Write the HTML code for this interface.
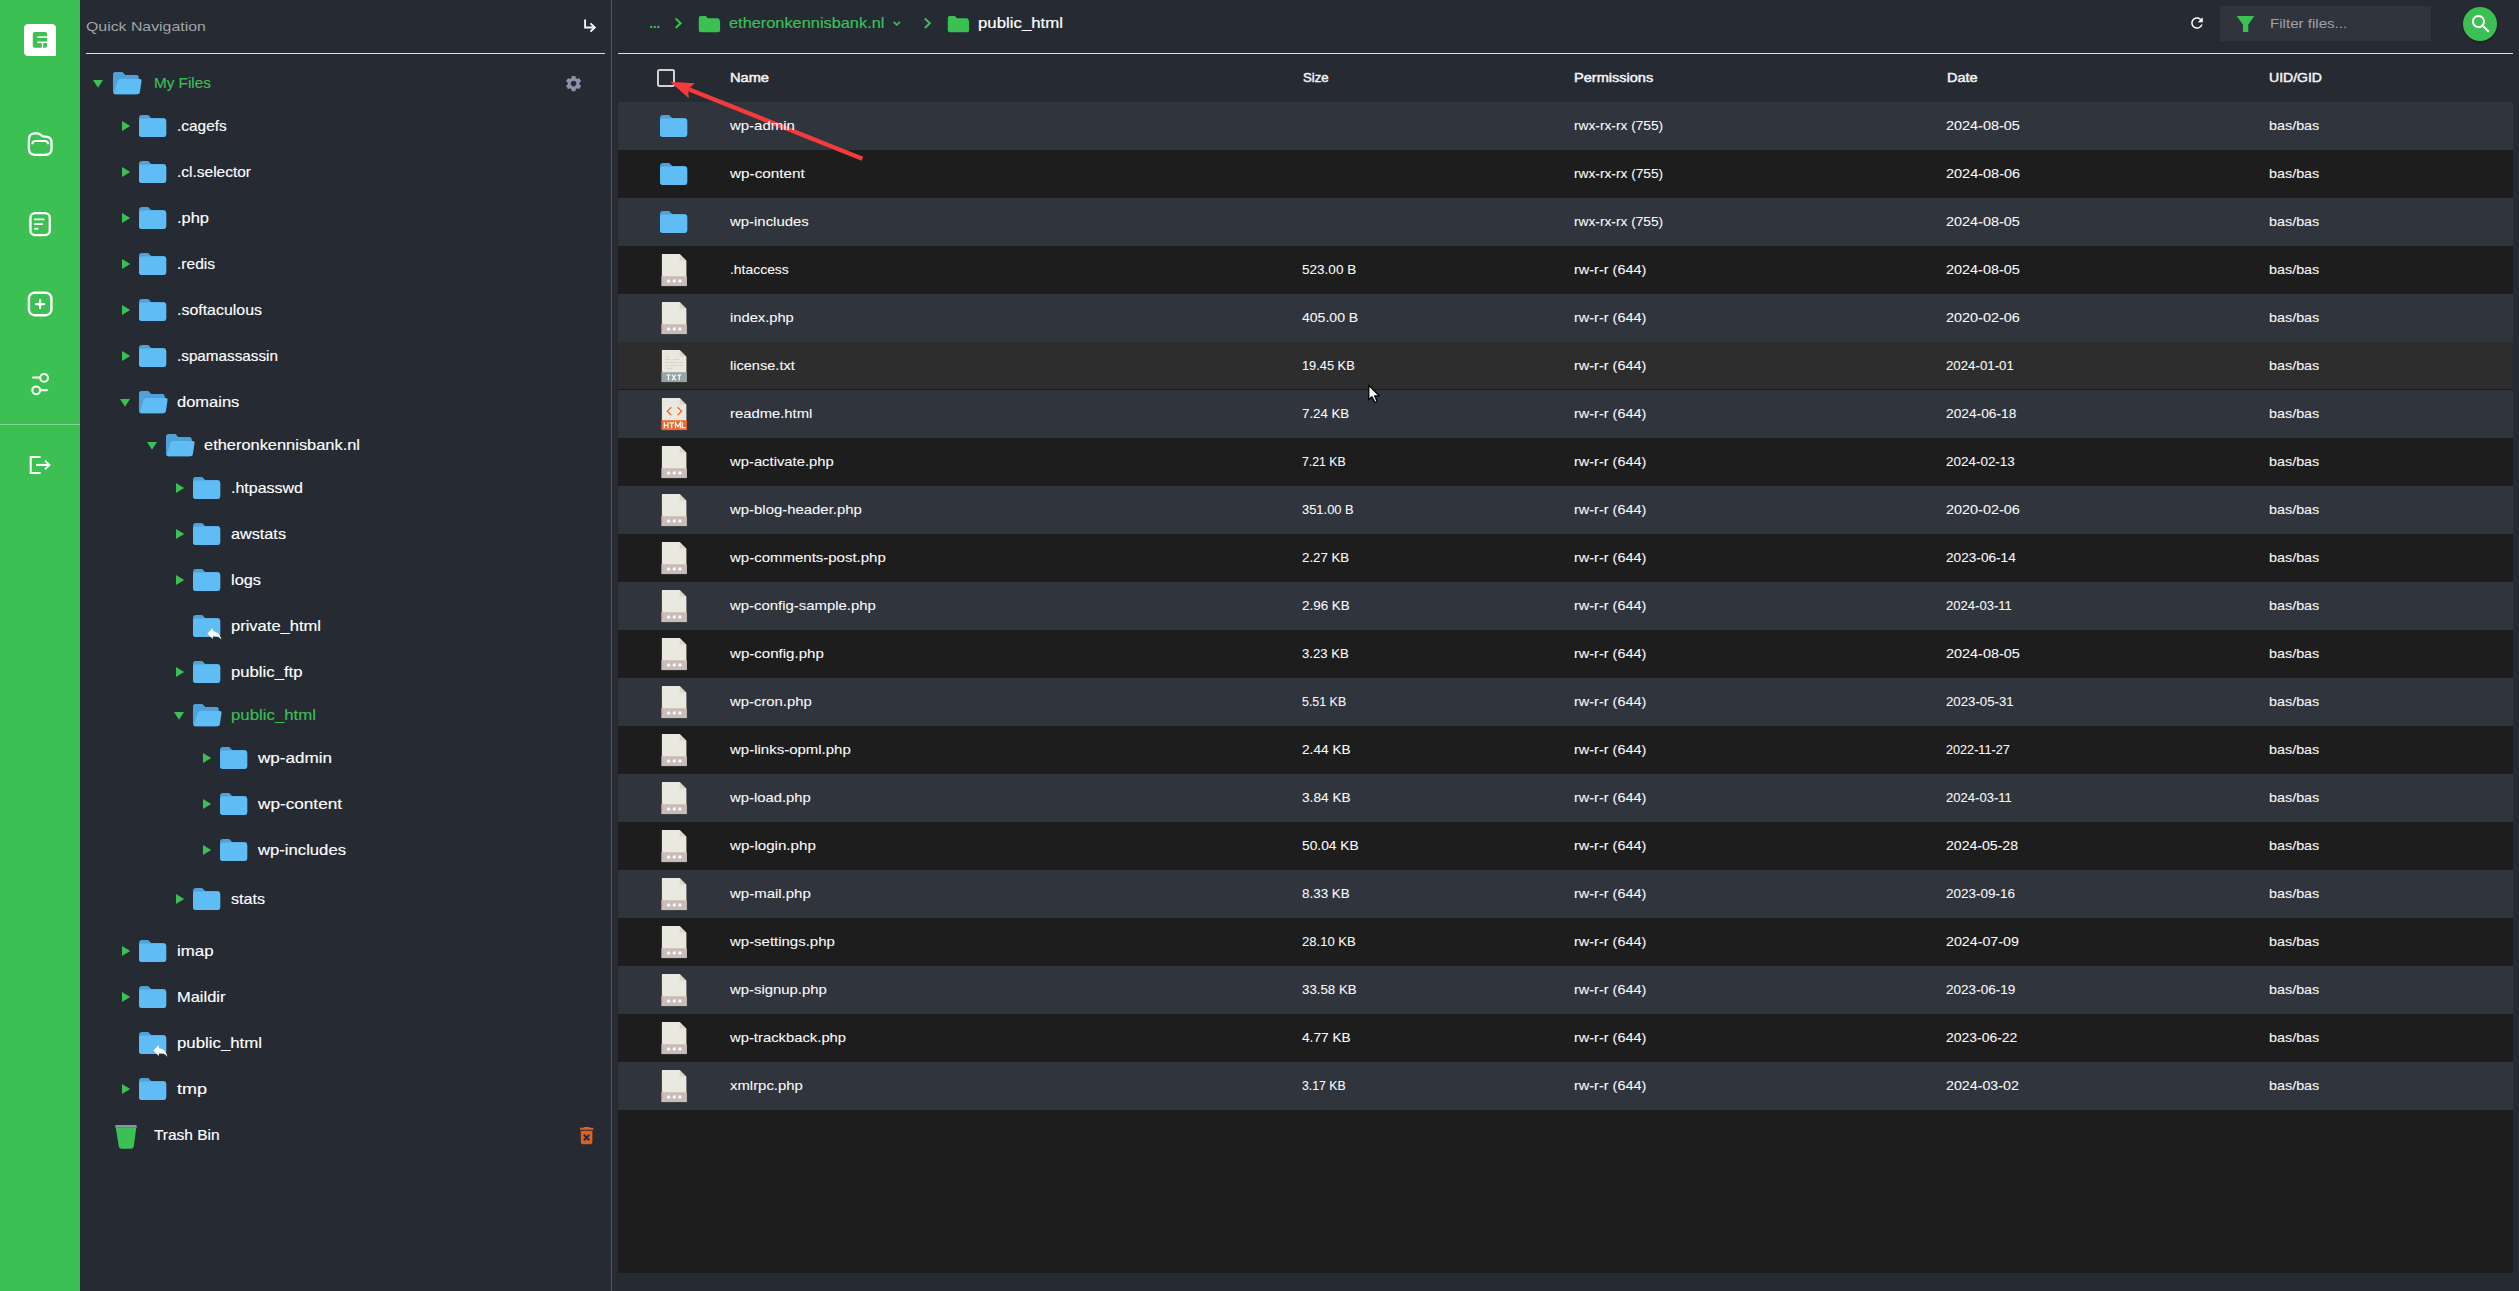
<!DOCTYPE html>
<html lang="en"><head><meta charset="utf-8"><title>File Manager</title>
<style>
html,body{margin:0;padding:0;background:#252a33}
body{width:2519px;height:1291px;overflow:hidden;position:relative;background:#252a33;font-family:"Liberation Sans",sans-serif;color:#fff}
.a{position:absolute;display:block}
.t{position:absolute;white-space:nowrap;transform-origin:0 50%;line-height:20px;height:20px;margin-top:-10px}
.tr{font-size:15px;color:#fff;-webkit-text-stroke:.15px #fff}
.bc{font-size:15px;color:#fff;-webkit-text-stroke:.2px #fff}
.g{color:#3cc054;-webkit-text-stroke-color:#3cc054}
.qn{font-size:13px;color:#a3a4a8}
.ff{font-size:13.500px;color:#a0a1a5}
.th{font-size:12.300px;color:#f4f4f4;-webkit-text-stroke:.45px #f4f4f4}
.td{font-size:13px;color:#fafafa;-webkit-text-stroke:.08px #fafafa}
</style></head>
<body>
<div class="a" style="left:0;top:0;width:80px;height:1291px;background:#3cc054"></div>
<svg class="a" style="left:24px;top:24px" width="32" height="32" viewBox="0 0 32 32"><path fill="#fff" d="M4.5 0H27.5Q32 0 32 4.5V32H4.5Q0 32 0 27.5V4.5Q0 0 4.5 0Z"/><rect x="8.8" y="8" width="14.3" height="15.8" rx="2" fill="#3cc054"/><rect x="13.3" y="12.3" width="10" height="1.5" fill="#fff"/><rect x="13.3" y="17.6" width="10" height="1.5" fill="#fff"/><rect x="17.8" y="19.1" width="1.4" height="5" fill="#fff"/></svg>
<svg class="a" style="left:20px;top:125px" width="40" height="40" viewBox="20 125 40 40" fill="none" stroke="#fff" stroke-width="2.3" stroke-linecap="round" stroke-linejoin="round"><path d="M28.9 148.5V139.5Q28.9 133.3 35 133.3H36.6Q39.3 133.3 40.8 135Q42.3 136.7 44.6 136.7H45.6Q51.5 136.7 51.5 142.8V148.5Q51.5 154.8 45.3 154.8H35.1Q28.9 154.8 28.9 148.5Z"/><path stroke-width="2" d="M32.4 143.4Q33 141.1 35.3 141.1H45.1Q47.4 141.1 48 143.4"/></svg>
<svg class="a" style="left:20px;top:204px" width="40" height="40" viewBox="20 204 40 40" fill="none" stroke="#fff" stroke-width="2.3" stroke-linecap="round"><rect x="30.45" y="213.15" width="19.3" height="21.9" rx="4.6"/><path stroke-width="1.9" d="M34.9 219.4H43.6M34.9 224.1H42.2M34.9 228.7H37.6"/></svg>
<svg class="a" style="left:20px;top:284px" width="40" height="40" viewBox="20 284 40 40" fill="none" stroke="#fff" stroke-width="2.4" stroke-linecap="round"><rect x="28.9" y="292.7" width="22.5" height="22.5" rx="5.8"/><path stroke-width="2.2" d="M36 304.1H44.2M40.1 300V308.2"/></svg>
<svg class="a" style="left:20px;top:364px" width="40" height="40" viewBox="20 364 40 40" fill="none" stroke="#fff" stroke-width="2" stroke-linecap="round"><circle cx="44.1" cy="377.9" r="3.9"/><path d="M33 377.6H39.6"/><circle cx="36.2" cy="390.3" r="3.9"/><path d="M40.8 390.3H47.2"/></svg>
<div class="a" style="left:0;top:424px;width:80px;height:1px;background:rgba(255,255,255,.35)"></div>
<svg class="a" style="left:20px;top:445px" width="40" height="40" viewBox="20 445 40 40" fill="none" stroke="#fff" stroke-width="2" stroke-linecap="butt" stroke-linejoin="miter"><path d="M40.6 457H30.7V473H40.6"/><path d="M36 464.9H49"/><path d="M45 460.6L49.4 464.9L45 469.2"/></svg>
<svg class="a" style="left:580px;top:15px" width="20" height="20" viewBox="580 15 20 20" fill="none" stroke="#fff" stroke-width="1.8"><path d="M585.1 19.4V27.5H594.2"/><path d="M590.5 23.4L594.8 27.5L590.5 31.6"/></svg>
<div class="a" style="left:86px;top:52.6px;width:519px;height:1.5px;background:#dedede"></div>
<svg class="a" style="left:563.900px;top:73.900px" width="19.200" height="19.200" viewBox="0 0 24 24"><path fill="#8a93ab" d="M19.14 12.94c.04-.3.06-.61.06-.94 0-.32-.02-.64-.07-.94l2.03-1.58c.18-.14.23-.41.12-.61l-1.92-3.32c-.12-.22-.37-.29-.59-.22l-2.39.96c-.5-.38-1.03-.7-1.62-.94l-.36-2.54c-.04-.24-.24-.41-.48-.41h-3.84c-.24 0-.43.17-.47.41l-.36 2.54c-.59.24-1.13.57-1.62.94l-2.39-.96c-.22-.08-.47 0-.59.22L2.74 8.87c-.12.21-.08.47.12.61l2.03 1.58c-.05.3-.09.63-.09.94s.02.64.07.94l-2.03 1.58c-.18.14-.23.41-.12.61l1.92 3.32c.12.22.37.29.59.22l2.39-.96c.5.38 1.03.7 1.62.94l.36 2.54c.05.24.24.41.48.41h3.84c.24 0 .44-.17.47-.41l.36-2.54c.59-.24 1.13-.56 1.62-.94l2.39.96c.22.08.47 0 .59-.22l1.92-3.32c.12-.22.07-.47-.12-.61l-2.01-1.58zM12 15.6c-1.98 0-3.6-1.62-3.6-3.6s1.620-3.6 3.6-3.6 3.6 1.62 3.600 3.600-1.620 3.600-3.600 3.600z"/></svg>
<svg class="a" style="left:93.0px;top:80.2px" width="10" height="8" viewBox="0 0 10 8"><path fill="#3cc054" d="M0 0H10L5 7.8Z"/></svg>
<svg class="a" style="left:112.6px;top:72.1px" width="30" height="23" viewBox="0 0 30 23"><path fill="#4ea2d9" d="M0 2.5Q0 0 2.5 0H9.4L12.3 2.9H23.3Q25.8 2.9 25.8 5.4V19.8Q25.8 22.3 23.3 22.3H2.5Q0 22.3 0 19.8Z"/><path fill="#60bcf5" d="M7.4 7.1H26.5Q28.9 7.1 28.5 9.4L26.9 20.2Q26.6 22.3 24.4 22.3H2.6Q0.5 22.3 1.1 20.2L4.5 9Q5.1 7.1 7.4 7.1Z"/></svg>
<svg class="a" style="left:121.9px;top:121.1px" width="9" height="10" viewBox="0 0 9 10"><path fill="#3cc054" d="M0 0L8.2 5L0 10Z"/></svg>
<svg class="a" style="left:139.15px;top:114.90px" width="28" height="23" viewBox="0 0 28 23"><path fill="#4ea2d9" d="M0 3Q0 0 3 0H9.2L12.1 2.900H24.200Q27.200 2.900 27.200 5.900V19Q27.200 22 24.200 22H3Q0 22 0 19Z"/><rect fill="#60bcf5" x="0" y="3.600" width="27.200" height="18.400" rx="3"/></svg>
<svg class="a" style="left:121.9px;top:167.1px" width="9" height="10" viewBox="0 0 9 10"><path fill="#3cc054" d="M0 0L8.2 5L0 10Z"/></svg>
<svg class="a" style="left:139.15px;top:160.90px" width="28" height="23" viewBox="0 0 28 23"><path fill="#4ea2d9" d="M0 3Q0 0 3 0H9.2L12.1 2.900H24.200Q27.200 2.900 27.200 5.900V19Q27.200 22 24.200 22H3Q0 22 0 19Z"/><rect fill="#60bcf5" x="0" y="3.600" width="27.200" height="18.400" rx="3"/></svg>
<svg class="a" style="left:121.9px;top:213.1px" width="9" height="10" viewBox="0 0 9 10"><path fill="#3cc054" d="M0 0L8.2 5L0 10Z"/></svg>
<svg class="a" style="left:139.15px;top:206.90px" width="28" height="23" viewBox="0 0 28 23"><path fill="#4ea2d9" d="M0 3Q0 0 3 0H9.2L12.1 2.900H24.200Q27.200 2.900 27.200 5.900V19Q27.200 22 24.200 22H3Q0 22 0 19Z"/><rect fill="#60bcf5" x="0" y="3.600" width="27.200" height="18.400" rx="3"/></svg>
<svg class="a" style="left:121.9px;top:259.1px" width="9" height="10" viewBox="0 0 9 10"><path fill="#3cc054" d="M0 0L8.2 5L0 10Z"/></svg>
<svg class="a" style="left:139.15px;top:252.90px" width="28" height="23" viewBox="0 0 28 23"><path fill="#4ea2d9" d="M0 3Q0 0 3 0H9.2L12.1 2.900H24.200Q27.200 2.900 27.200 5.900V19Q27.200 22 24.200 22H3Q0 22 0 19Z"/><rect fill="#60bcf5" x="0" y="3.600" width="27.200" height="18.400" rx="3"/></svg>
<svg class="a" style="left:121.9px;top:305.1px" width="9" height="10" viewBox="0 0 9 10"><path fill="#3cc054" d="M0 0L8.2 5L0 10Z"/></svg>
<svg class="a" style="left:139.15px;top:298.90px" width="28" height="23" viewBox="0 0 28 23"><path fill="#4ea2d9" d="M0 3Q0 0 3 0H9.2L12.1 2.900H24.200Q27.200 2.900 27.200 5.900V19Q27.200 22 24.200 22H3Q0 22 0 19Z"/><rect fill="#60bcf5" x="0" y="3.600" width="27.200" height="18.400" rx="3"/></svg>
<svg class="a" style="left:121.9px;top:351.1px" width="9" height="10" viewBox="0 0 9 10"><path fill="#3cc054" d="M0 0L8.2 5L0 10Z"/></svg>
<svg class="a" style="left:139.15px;top:344.90px" width="28" height="23" viewBox="0 0 28 23"><path fill="#4ea2d9" d="M0 3Q0 0 3 0H9.2L12.1 2.900H24.200Q27.200 2.900 27.200 5.900V19Q27.200 22 24.200 22H3Q0 22 0 19Z"/><rect fill="#60bcf5" x="0" y="3.600" width="27.200" height="18.400" rx="3"/></svg>
<svg class="a" style="left:120.0px;top:399.1px" width="10" height="8" viewBox="0 0 10 8"><path fill="#3cc054" d="M0 0H10L5 7.8Z"/></svg>
<svg class="a" style="left:139.3px;top:391.0px" width="30" height="23" viewBox="0 0 30 23"><path fill="#4ea2d9" d="M0 2.5Q0 0 2.5 0H9.4L12.3 2.9H23.3Q25.8 2.9 25.8 5.4V19.8Q25.8 22.3 23.3 22.3H2.5Q0 22.3 0 19.8Z"/><path fill="#60bcf5" d="M7.4 7.1H26.5Q28.9 7.1 28.5 9.4L26.9 20.2Q26.6 22.3 24.4 22.3H2.6Q0.5 22.3 1.1 20.2L4.5 9Q5.1 7.1 7.4 7.1Z"/></svg>
<svg class="a" style="left:147.0px;top:442.1px" width="10" height="8" viewBox="0 0 10 8"><path fill="#3cc054" d="M0 0H10L5 7.8Z"/></svg>
<svg class="a" style="left:166.3px;top:434.0px" width="30" height="23" viewBox="0 0 30 23"><path fill="#4ea2d9" d="M0 2.5Q0 0 2.5 0H9.4L12.3 2.9H23.3Q25.8 2.9 25.8 5.4V19.8Q25.8 22.3 23.3 22.3H2.5Q0 22.3 0 19.8Z"/><path fill="#60bcf5" d="M7.4 7.1H26.5Q28.9 7.1 28.5 9.4L26.9 20.2Q26.6 22.3 24.4 22.3H2.6Q0.5 22.3 1.1 20.2L4.5 9Q5.1 7.1 7.4 7.1Z"/></svg>
<svg class="a" style="left:175.9px;top:483.1px" width="9" height="10" viewBox="0 0 9 10"><path fill="#3cc054" d="M0 0L8.2 5L0 10Z"/></svg>
<svg class="a" style="left:193.15px;top:476.90px" width="28" height="23" viewBox="0 0 28 23"><path fill="#4ea2d9" d="M0 3Q0 0 3 0H9.2L12.1 2.900H24.200Q27.200 2.900 27.200 5.900V19Q27.200 22 24.200 22H3Q0 22 0 19Z"/><rect fill="#60bcf5" x="0" y="3.600" width="27.200" height="18.400" rx="3"/></svg>
<svg class="a" style="left:175.9px;top:529.1px" width="9" height="10" viewBox="0 0 9 10"><path fill="#3cc054" d="M0 0L8.2 5L0 10Z"/></svg>
<svg class="a" style="left:193.15px;top:522.90px" width="28" height="23" viewBox="0 0 28 23"><path fill="#4ea2d9" d="M0 3Q0 0 3 0H9.2L12.1 2.900H24.200Q27.200 2.900 27.200 5.900V19Q27.200 22 24.200 22H3Q0 22 0 19Z"/><rect fill="#60bcf5" x="0" y="3.600" width="27.200" height="18.400" rx="3"/></svg>
<svg class="a" style="left:175.9px;top:575.1px" width="9" height="10" viewBox="0 0 9 10"><path fill="#3cc054" d="M0 0L8.2 5L0 10Z"/></svg>
<svg class="a" style="left:193.15px;top:568.90px" width="28" height="23" viewBox="0 0 28 23"><path fill="#4ea2d9" d="M0 3Q0 0 3 0H9.2L12.1 2.900H24.200Q27.200 2.900 27.200 5.900V19Q27.200 22 24.200 22H3Q0 22 0 19Z"/><rect fill="#60bcf5" x="0" y="3.600" width="27.200" height="18.400" rx="3"/></svg>
<svg class="a" style="left:193.15px;top:614.90px" width="28" height="23" viewBox="0 0 28 23"><path fill="#4ea2d9" d="M0 3Q0 0 3 0H9.2L12.1 2.900H24.200Q27.200 2.900 27.200 5.900V19Q27.200 22 24.200 22H3Q0 22 0 19Z"/><rect fill="#60bcf5" x="0" y="3.600" width="27.200" height="18.400" rx="3"/></svg><svg class="a" style="left:204.9px;top:624.1px" width="18.8" height="18.8" viewBox="0 0 24 24"><path fill="#fff" d="M10 9V5l-7 7 7 7v-4.1c5 0 8.5 1.6 11 5.1-1-5-4-10-11-11z"/></svg>
<svg class="a" style="left:175.9px;top:667.1px" width="9" height="10" viewBox="0 0 9 10"><path fill="#3cc054" d="M0 0L8.2 5L0 10Z"/></svg>
<svg class="a" style="left:193.15px;top:660.90px" width="28" height="23" viewBox="0 0 28 23"><path fill="#4ea2d9" d="M0 3Q0 0 3 0H9.2L12.1 2.900H24.200Q27.200 2.900 27.200 5.900V19Q27.200 22 24.200 22H3Q0 22 0 19Z"/><rect fill="#60bcf5" x="0" y="3.600" width="27.200" height="18.400" rx="3"/></svg>
<svg class="a" style="left:174.0px;top:712.1px" width="10" height="8" viewBox="0 0 10 8"><path fill="#3cc054" d="M0 0H10L5 7.8Z"/></svg>
<svg class="a" style="left:193.3px;top:704.0px" width="30" height="23" viewBox="0 0 30 23"><path fill="#4ea2d9" d="M0 2.5Q0 0 2.5 0H9.4L12.3 2.9H23.3Q25.8 2.9 25.8 5.4V19.8Q25.8 22.3 23.3 22.3H2.5Q0 22.3 0 19.8Z"/><path fill="#60bcf5" d="M7.4 7.1H26.5Q28.9 7.1 28.5 9.4L26.9 20.2Q26.6 22.3 24.4 22.3H2.6Q0.5 22.3 1.1 20.2L4.5 9Q5.1 7.1 7.4 7.1Z"/></svg>
<svg class="a" style="left:202.9px;top:753.1px" width="9" height="10" viewBox="0 0 9 10"><path fill="#3cc054" d="M0 0L8.2 5L0 10Z"/></svg>
<svg class="a" style="left:220.15px;top:746.90px" width="28" height="23" viewBox="0 0 28 23"><path fill="#4ea2d9" d="M0 3Q0 0 3 0H9.2L12.1 2.900H24.200Q27.200 2.900 27.200 5.900V19Q27.200 22 24.200 22H3Q0 22 0 19Z"/><rect fill="#60bcf5" x="0" y="3.600" width="27.200" height="18.400" rx="3"/></svg>
<svg class="a" style="left:202.9px;top:799.1px" width="9" height="10" viewBox="0 0 9 10"><path fill="#3cc054" d="M0 0L8.2 5L0 10Z"/></svg>
<svg class="a" style="left:220.15px;top:792.90px" width="28" height="23" viewBox="0 0 28 23"><path fill="#4ea2d9" d="M0 3Q0 0 3 0H9.2L12.1 2.900H24.200Q27.200 2.900 27.200 5.900V19Q27.200 22 24.200 22H3Q0 22 0 19Z"/><rect fill="#60bcf5" x="0" y="3.600" width="27.200" height="18.400" rx="3"/></svg>
<svg class="a" style="left:202.9px;top:845.1px" width="9" height="10" viewBox="0 0 9 10"><path fill="#3cc054" d="M0 0L8.2 5L0 10Z"/></svg>
<svg class="a" style="left:220.15px;top:838.90px" width="28" height="23" viewBox="0 0 28 23"><path fill="#4ea2d9" d="M0 3Q0 0 3 0H9.2L12.1 2.900H24.200Q27.200 2.900 27.200 5.900V19Q27.200 22 24.200 22H3Q0 22 0 19Z"/><rect fill="#60bcf5" x="0" y="3.600" width="27.200" height="18.400" rx="3"/></svg>
<svg class="a" style="left:175.9px;top:894.2px" width="9" height="10" viewBox="0 0 9 10"><path fill="#3cc054" d="M0 0L8.2 5L0 10Z"/></svg>
<svg class="a" style="left:193.15px;top:888.00px" width="28" height="23" viewBox="0 0 28 23"><path fill="#4ea2d9" d="M0 3Q0 0 3 0H9.2L12.1 2.900H24.200Q27.200 2.900 27.200 5.900V19Q27.200 22 24.200 22H3Q0 22 0 19Z"/><rect fill="#60bcf5" x="0" y="3.600" width="27.200" height="18.400" rx="3"/></svg>
<svg class="a" style="left:121.9px;top:946.1px" width="9" height="10" viewBox="0 0 9 10"><path fill="#3cc054" d="M0 0L8.2 5L0 10Z"/></svg>
<svg class="a" style="left:139.15px;top:939.90px" width="28" height="23" viewBox="0 0 28 23"><path fill="#4ea2d9" d="M0 3Q0 0 3 0H9.2L12.1 2.900H24.200Q27.200 2.900 27.200 5.900V19Q27.200 22 24.200 22H3Q0 22 0 19Z"/><rect fill="#60bcf5" x="0" y="3.600" width="27.200" height="18.400" rx="3"/></svg>
<svg class="a" style="left:121.9px;top:992.2px" width="9" height="10" viewBox="0 0 9 10"><path fill="#3cc054" d="M0 0L8.2 5L0 10Z"/></svg>
<svg class="a" style="left:139.15px;top:986.00px" width="28" height="23" viewBox="0 0 28 23"><path fill="#4ea2d9" d="M0 3Q0 0 3 0H9.2L12.1 2.900H24.200Q27.200 2.900 27.200 5.900V19Q27.200 22 24.200 22H3Q0 22 0 19Z"/><rect fill="#60bcf5" x="0" y="3.600" width="27.200" height="18.400" rx="3"/></svg>
<svg class="a" style="left:139.15px;top:1032.00px" width="28" height="23" viewBox="0 0 28 23"><path fill="#4ea2d9" d="M0 3Q0 0 3 0H9.2L12.1 2.900H24.200Q27.200 2.900 27.200 5.900V19Q27.200 22 24.200 22H3Q0 22 0 19Z"/><rect fill="#60bcf5" x="0" y="3.600" width="27.200" height="18.400" rx="3"/></svg><svg class="a" style="left:150.9px;top:1041.2px" width="18.8" height="18.8" viewBox="0 0 24 24"><path fill="#fff" d="M10 9V5l-7 7 7 7v-4.1c5 0 8.5 1.6 11 5.1-1-5-4-10-11-11z"/></svg>
<svg class="a" style="left:121.9px;top:1084.2px" width="9" height="10" viewBox="0 0 9 10"><path fill="#3cc054" d="M0 0L8.2 5L0 10Z"/></svg>
<svg class="a" style="left:139.15px;top:1078.00px" width="28" height="23" viewBox="0 0 28 23"><path fill="#4ea2d9" d="M0 3Q0 0 3 0H9.2L12.1 2.900H24.200Q27.200 2.900 27.200 5.900V19Q27.200 22 24.200 22H3Q0 22 0 19Z"/><rect fill="#60bcf5" x="0" y="3.600" width="27.200" height="18.400" rx="3"/></svg>
<svg class="a" style="left:113px;top:1123px" width="26" height="27" viewBox="113 1123 26 27"><path fill="#8d93a6" d="M115.6 1124.9H136.4L137 1127.8H115Z"/><path fill="#3cc054" d="M115.8 1127.8H136.3L133.8 1146.6Q133.5 1148.7 131.4 1148.7H121.2Q119.1 1148.7 118.8 1146.6Z"/></svg>
<svg class="a" style="left:574.9px;top:1123.7px" width="23.2" height="23.2" viewBox="0 0 24 24"><path fill="#e0601c" d="M6 19c0 1.1.9 2 2 2h8c1.1 0 2-.9 2-2V7H6v12zm2.46-7.12l1.41-1.41L12 12.59l2.12-2.12 1.41 1.41L13.41 14l2.12 2.120-1.410 1.410L12 15.41l-2.120 2.120-1.410-1.410L10.590 14l-2.130-2.120zM15.500 4l-1-1h-5l-1 1H5v2h14V4z"/></svg>
<div class="a" style="left:611px;top:0;width:1.2px;height:1291px;background:#54575c"></div>
<svg class="a" style="left:640px;top:10px" width="340" height="30" viewBox="640 10 340 30"><g fill="#3cc054"><rect x="650.2" y="25.9" width="2.1" height="2.1"/><rect x="653.7" y="25.9" width="2.1" height="2.1"/><rect x="657.2" y="25.9" width="2.1" height="2.1"/></g><g fill="none" stroke="#3cc054" stroke-width="2"><path d="M675.6 18.6L680.6 23.3L675.6 28"/><path d="M924.8 18.6L929.8 23.3L924.8 28"/><path stroke-width="1.7" d="M893.6 21.8L896.8 24.9L900 21.8"/></g><path fill="#3cc054" d="M698.8 18Q698.800 16 700.800 16H705.800L708 18.200H717.600Q719.600 18.200 719.600 20.200L720.100 21.300V30.200Q720.100 32.200 718.100 32.200H700.800Q698.800 32.200 698.800 30.200Z"/><path fill="#3cc054" d="M947.800 18Q947.800 16 949.800 16H954.800L957 18.200H966.600Q968.600 18.200 968.600 20.200L969.100 21.300V30.200Q969.100 32.200 967.100 32.200H949.800Q947.800 32.200 947.800 30.200Z"/></svg>
<svg class="a" style="left:2187.100px;top:13.200px" width="20" height="20" viewBox="-1.8 -1.8 27.6 27.6"><path fill="#fff" d="M17.65 6.35C16.2 4.9 14.21 4 12 4c-4.42 0-7.99 3.58-7.99 8s3.570 8 7.990 8c3.730 0 6.840-2.550 7.730-6h-2.080c-.820 2.330-3.040 4-5.650 4-3.310 0-6-2.690-6-6s2.690-6 6-6c1.660 0 3.140.69 4.220 1.780L13 11h7V4l-2.350 2.350z"/></svg>
<div class="a" style="left:2220px;top:6px;width:211px;height:35px;background:#2f343d"></div>
<svg class="a" style="left:2234px;top:12px" width="24" height="24" viewBox="2234 12 24 24"><path fill="#3cc054" d="M2236.7 15.9H2254.2L2248.300 24.700V32.100H2243V24.700Z"/></svg>
<div class="a" style="left:2463px;top:6.5px;width:34px;height:34px;border-radius:50%;background:#3cc054;box-shadow:0 1px 2px rgba(0,0,0,.35)"></div>
<svg class="a" style="left:2469px;top:11.800px" width="24" height="24" viewBox="0 0 24 24"><path fill="#fff" d="M15.5 14h-.79l-.28-.27C15.41 12.59 16 11.11 16 9.5 16 5.91 13.09 3 9.5 3S3 5.91 3 9.5 5.91 16 9.5 16c1.610 0 3.090-.590 4.230-1.570l.27.28v.79l5 4.990L20.490 19l-4.990-5zm-6 0C7.010 14 5 11.990 5 9.500S7.010 5 9.500 5 14 7.010 14 9.500 11.990 14 9.500 14z"/></svg>
<div class="a" style="left:618px;top:52.6px;width:1895px;height:1.500px;background:#dedede"></div>
<div class="a" style="left:657px;top:69px;width:14px;height:14px;border:2px solid #d2d2d2;border-radius:2.5px"></div>
<div class="a" style="left:618px;top:102px;width:1895px;height:48px;background:#2f343d"></div>
<svg class="a" style="left:660.05px;top:114.90px" width="28" height="23" viewBox="0 0 28 23"><path fill="#4ea2d9" d="M0 3Q0 0 3 0H9.2L12.1 2.900H24.200Q27.200 2.900 27.200 5.900V19Q27.200 22 24.200 22H3Q0 22 0 19Z"/><rect fill="#60bcf5" x="0" y="3.600" width="27.200" height="18.400" rx="3"/></svg>
<div class="a" style="left:618px;top:150px;width:1895px;height:48px;background:#1d1d1d"></div>
<svg class="a" style="left:660.05px;top:162.90px" width="28" height="23" viewBox="0 0 28 23"><path fill="#4ea2d9" d="M0 3Q0 0 3 0H9.2L12.1 2.900H24.200Q27.200 2.900 27.200 5.900V19Q27.200 22 24.200 22H3Q0 22 0 19Z"/><rect fill="#60bcf5" x="0" y="3.600" width="27.200" height="18.400" rx="3"/></svg>
<div class="a" style="left:618px;top:198px;width:1895px;height:48px;background:#2f343d"></div>
<svg class="a" style="left:660.05px;top:210.90px" width="28" height="23" viewBox="0 0 28 23"><path fill="#4ea2d9" d="M0 3Q0 0 3 0H9.2L12.1 2.900H24.200Q27.200 2.900 27.200 5.900V19Q27.200 22 24.200 22H3Q0 22 0 19Z"/><rect fill="#60bcf5" x="0" y="3.600" width="27.200" height="18.400" rx="3"/></svg>
<div class="a" style="left:618px;top:246px;width:1895px;height:48px;background:#1d1d1d"></div>
<svg class="a" style="left:660.8px;top:253.8px" width="27" height="33" viewBox="0 0 27 33"><path fill="#e9e9e0" d="M0.900 0H18.600L25.400 6.700V23H0.900Z"/><path fill="#d8d7ca" d="M18.600 0V6.700H25.400Z"/><rect x="0.350" y="22.200" width="25.600" height="9.900" fill="#c9bcb8"/><circle cx="7.600" cy="27" r="1.700" fill="#fff"/><circle cx="13.300" cy="27" r="1.700" fill="#fff"/><circle cx="19" cy="27" r="1.700" fill="#fff"/></svg>
<div class="a" style="left:618px;top:294px;width:1895px;height:48px;background:#2f343d"></div>
<svg class="a" style="left:660.8px;top:301.8px" width="27" height="33" viewBox="0 0 27 33"><path fill="#e9e9e0" d="M0.900 0H18.600L25.400 6.700V23H0.900Z"/><path fill="#d8d7ca" d="M18.600 0V6.700H25.400Z"/><rect x="0.350" y="22.200" width="25.600" height="9.900" fill="#c9bcb8"/><circle cx="7.600" cy="27" r="1.700" fill="#fff"/><circle cx="13.300" cy="27" r="1.700" fill="#fff"/><circle cx="19" cy="27" r="1.700" fill="#fff"/></svg>
<div class="a" style="left:618px;top:342px;width:1895px;height:47px;background:#2d2d2d"></div>
<div class="a" style="left:618px;top:389px;width:1895px;height:1px;background:#1b1b1c"></div>
<svg class="a" style="left:660.8px;top:349.8px" width="27" height="33" viewBox="0 0 27 33"><path fill="#e9e9e0" d="M0.900 0H18.600L25.400 6.700V23H0.900Z"/><path fill="#d8d7ca" d="M18.600 0V6.700H25.400Z"/><rect x="0.350" y="22.200" width="25.600" height="9.900" fill="#95a5a5"/><g stroke="#d9c9c6" stroke-width="0.800" fill="none"><path d="M4 6.600H8.200M4 9.500H9.500M11 9.500H11.600M13.300 9.500H18.800M20.400 9.500H22.300M4 12.500H16.800M18.300 12.500H22.300M4 15.400H7.100M8.600 15.400H15.200M16.700 15.400H22.300M4 18.300H5M6.300 18.300H11.300"/></g><g stroke="#fff" stroke-width="1.150" fill="none"><path d="M5.400 25H9.500M7.450 25V30.200M11 24.600L14.700 30.200M14.700 24.600L11 30.200M16.200 25H20.300M18.250 25V30.200"/></g></svg>
<div class="a" style="left:618px;top:390px;width:1895px;height:48px;background:#2f343d"></div>
<svg class="a" style="left:660.8px;top:397.8px" width="27" height="33" viewBox="0 0 27 33"><path fill="#e9e9e0" d="M0.900 0H18.600L25.400 6.700V23H0.900Z"/><path fill="#d8d7ca" d="M18.600 0V6.700H25.400Z"/><rect x="0.350" y="22.200" width="25.600" height="9.900" fill="#f0692f"/><g stroke="#f0692f" stroke-width="1.300" fill="none"><path d="M10.300 9.200L6.300 13.200L10.300 17.200M16.600 9.200L20.600 13.200L16.600 17.200"/></g><g stroke="#fff" stroke-width="1.200" fill="none"><path d="M3.300 24.300V30.300M3.300 27.300H7M7 24.300V30.300M8.500 24.900H12.900M10.700 24.900V30.300M14.500 30.300V24.600L16.900 28.500L19.300 24.600V30.300M21.200 24.300V29.700H24.300"/></g></svg>
<div class="a" style="left:618px;top:438px;width:1895px;height:48px;background:#1d1d1d"></div>
<svg class="a" style="left:660.8px;top:445.8px" width="27" height="33" viewBox="0 0 27 33"><path fill="#e9e9e0" d="M0.900 0H18.600L25.400 6.700V23H0.900Z"/><path fill="#d8d7ca" d="M18.600 0V6.700H25.400Z"/><rect x="0.350" y="22.200" width="25.600" height="9.900" fill="#c9bcb8"/><circle cx="7.600" cy="27" r="1.700" fill="#fff"/><circle cx="13.300" cy="27" r="1.700" fill="#fff"/><circle cx="19" cy="27" r="1.700" fill="#fff"/></svg>
<div class="a" style="left:618px;top:486px;width:1895px;height:48px;background:#2f343d"></div>
<svg class="a" style="left:660.8px;top:493.8px" width="27" height="33" viewBox="0 0 27 33"><path fill="#e9e9e0" d="M0.900 0H18.600L25.400 6.700V23H0.900Z"/><path fill="#d8d7ca" d="M18.600 0V6.700H25.400Z"/><rect x="0.350" y="22.200" width="25.600" height="9.900" fill="#c9bcb8"/><circle cx="7.600" cy="27" r="1.700" fill="#fff"/><circle cx="13.300" cy="27" r="1.700" fill="#fff"/><circle cx="19" cy="27" r="1.700" fill="#fff"/></svg>
<div class="a" style="left:618px;top:534px;width:1895px;height:48px;background:#1d1d1d"></div>
<svg class="a" style="left:660.8px;top:541.8px" width="27" height="33" viewBox="0 0 27 33"><path fill="#e9e9e0" d="M0.900 0H18.600L25.400 6.700V23H0.900Z"/><path fill="#d8d7ca" d="M18.600 0V6.700H25.400Z"/><rect x="0.350" y="22.200" width="25.600" height="9.900" fill="#c9bcb8"/><circle cx="7.600" cy="27" r="1.700" fill="#fff"/><circle cx="13.300" cy="27" r="1.700" fill="#fff"/><circle cx="19" cy="27" r="1.700" fill="#fff"/></svg>
<div class="a" style="left:618px;top:582px;width:1895px;height:48px;background:#2f343d"></div>
<svg class="a" style="left:660.8px;top:589.8px" width="27" height="33" viewBox="0 0 27 33"><path fill="#e9e9e0" d="M0.900 0H18.600L25.400 6.700V23H0.900Z"/><path fill="#d8d7ca" d="M18.600 0V6.700H25.400Z"/><rect x="0.350" y="22.200" width="25.600" height="9.900" fill="#c9bcb8"/><circle cx="7.600" cy="27" r="1.700" fill="#fff"/><circle cx="13.300" cy="27" r="1.700" fill="#fff"/><circle cx="19" cy="27" r="1.700" fill="#fff"/></svg>
<div class="a" style="left:618px;top:630px;width:1895px;height:48px;background:#1d1d1d"></div>
<svg class="a" style="left:660.8px;top:637.8px" width="27" height="33" viewBox="0 0 27 33"><path fill="#e9e9e0" d="M0.900 0H18.600L25.400 6.700V23H0.900Z"/><path fill="#d8d7ca" d="M18.600 0V6.700H25.400Z"/><rect x="0.350" y="22.200" width="25.600" height="9.900" fill="#c9bcb8"/><circle cx="7.600" cy="27" r="1.700" fill="#fff"/><circle cx="13.300" cy="27" r="1.700" fill="#fff"/><circle cx="19" cy="27" r="1.700" fill="#fff"/></svg>
<div class="a" style="left:618px;top:678px;width:1895px;height:48px;background:#2f343d"></div>
<svg class="a" style="left:660.8px;top:685.8px" width="27" height="33" viewBox="0 0 27 33"><path fill="#e9e9e0" d="M0.900 0H18.600L25.400 6.700V23H0.900Z"/><path fill="#d8d7ca" d="M18.600 0V6.700H25.400Z"/><rect x="0.350" y="22.200" width="25.600" height="9.900" fill="#c9bcb8"/><circle cx="7.600" cy="27" r="1.700" fill="#fff"/><circle cx="13.300" cy="27" r="1.700" fill="#fff"/><circle cx="19" cy="27" r="1.700" fill="#fff"/></svg>
<div class="a" style="left:618px;top:726px;width:1895px;height:48px;background:#1d1d1d"></div>
<svg class="a" style="left:660.8px;top:733.8px" width="27" height="33" viewBox="0 0 27 33"><path fill="#e9e9e0" d="M0.900 0H18.600L25.400 6.700V23H0.900Z"/><path fill="#d8d7ca" d="M18.600 0V6.700H25.400Z"/><rect x="0.350" y="22.200" width="25.600" height="9.900" fill="#c9bcb8"/><circle cx="7.600" cy="27" r="1.700" fill="#fff"/><circle cx="13.300" cy="27" r="1.700" fill="#fff"/><circle cx="19" cy="27" r="1.700" fill="#fff"/></svg>
<div class="a" style="left:618px;top:774px;width:1895px;height:48px;background:#2f343d"></div>
<svg class="a" style="left:660.8px;top:781.8px" width="27" height="33" viewBox="0 0 27 33"><path fill="#e9e9e0" d="M0.900 0H18.600L25.400 6.700V23H0.900Z"/><path fill="#d8d7ca" d="M18.600 0V6.700H25.400Z"/><rect x="0.350" y="22.200" width="25.600" height="9.900" fill="#c9bcb8"/><circle cx="7.600" cy="27" r="1.700" fill="#fff"/><circle cx="13.300" cy="27" r="1.700" fill="#fff"/><circle cx="19" cy="27" r="1.700" fill="#fff"/></svg>
<div class="a" style="left:618px;top:822px;width:1895px;height:48px;background:#1d1d1d"></div>
<svg class="a" style="left:660.8px;top:829.8px" width="27" height="33" viewBox="0 0 27 33"><path fill="#e9e9e0" d="M0.900 0H18.600L25.400 6.700V23H0.900Z"/><path fill="#d8d7ca" d="M18.600 0V6.700H25.400Z"/><rect x="0.350" y="22.200" width="25.600" height="9.900" fill="#c9bcb8"/><circle cx="7.600" cy="27" r="1.700" fill="#fff"/><circle cx="13.300" cy="27" r="1.700" fill="#fff"/><circle cx="19" cy="27" r="1.700" fill="#fff"/></svg>
<div class="a" style="left:618px;top:870px;width:1895px;height:48px;background:#2f343d"></div>
<svg class="a" style="left:660.8px;top:877.8px" width="27" height="33" viewBox="0 0 27 33"><path fill="#e9e9e0" d="M0.900 0H18.600L25.400 6.700V23H0.900Z"/><path fill="#d8d7ca" d="M18.600 0V6.700H25.400Z"/><rect x="0.350" y="22.200" width="25.600" height="9.900" fill="#c9bcb8"/><circle cx="7.600" cy="27" r="1.700" fill="#fff"/><circle cx="13.300" cy="27" r="1.700" fill="#fff"/><circle cx="19" cy="27" r="1.700" fill="#fff"/></svg>
<div class="a" style="left:618px;top:918px;width:1895px;height:48px;background:#1d1d1d"></div>
<svg class="a" style="left:660.8px;top:925.8px" width="27" height="33" viewBox="0 0 27 33"><path fill="#e9e9e0" d="M0.900 0H18.600L25.400 6.700V23H0.900Z"/><path fill="#d8d7ca" d="M18.600 0V6.700H25.400Z"/><rect x="0.350" y="22.200" width="25.600" height="9.900" fill="#c9bcb8"/><circle cx="7.600" cy="27" r="1.700" fill="#fff"/><circle cx="13.300" cy="27" r="1.700" fill="#fff"/><circle cx="19" cy="27" r="1.700" fill="#fff"/></svg>
<div class="a" style="left:618px;top:966px;width:1895px;height:48px;background:#2f343d"></div>
<svg class="a" style="left:660.8px;top:973.8px" width="27" height="33" viewBox="0 0 27 33"><path fill="#e9e9e0" d="M0.900 0H18.600L25.400 6.700V23H0.900Z"/><path fill="#d8d7ca" d="M18.600 0V6.700H25.400Z"/><rect x="0.350" y="22.200" width="25.600" height="9.900" fill="#c9bcb8"/><circle cx="7.600" cy="27" r="1.700" fill="#fff"/><circle cx="13.300" cy="27" r="1.700" fill="#fff"/><circle cx="19" cy="27" r="1.700" fill="#fff"/></svg>
<div class="a" style="left:618px;top:1014px;width:1895px;height:48px;background:#1d1d1d"></div>
<svg class="a" style="left:660.8px;top:1021.8px" width="27" height="33" viewBox="0 0 27 33"><path fill="#e9e9e0" d="M0.900 0H18.600L25.400 6.700V23H0.900Z"/><path fill="#d8d7ca" d="M18.600 0V6.700H25.400Z"/><rect x="0.350" y="22.200" width="25.600" height="9.900" fill="#c9bcb8"/><circle cx="7.600" cy="27" r="1.700" fill="#fff"/><circle cx="13.300" cy="27" r="1.700" fill="#fff"/><circle cx="19" cy="27" r="1.700" fill="#fff"/></svg>
<div class="a" style="left:618px;top:1062px;width:1895px;height:48px;background:#2f343d"></div>
<svg class="a" style="left:660.8px;top:1069.8px" width="27" height="33" viewBox="0 0 27 33"><path fill="#e9e9e0" d="M0.900 0H18.600L25.400 6.700V23H0.900Z"/><path fill="#d8d7ca" d="M18.600 0V6.700H25.400Z"/><rect x="0.350" y="22.200" width="25.600" height="9.900" fill="#c9bcb8"/><circle cx="7.600" cy="27" r="1.700" fill="#fff"/><circle cx="13.300" cy="27" r="1.700" fill="#fff"/><circle cx="19" cy="27" r="1.700" fill="#fff"/></svg>
<div class="a" style="left:618px;top:1110px;width:1895px;height:163px;background:#1d1d1d"></div>
<svg class="a" style="left:660px;top:70px" width="220" height="100" viewBox="660 70 220 100"><path d="M862.4 158.700L689.300 89.600" stroke="#f43b3b" stroke-width="4.300" fill="none"/><path fill="#f43b3b" d="M670.200 81.700L694.800 83.300L690.300 87.500L688.300 92L688.800 98.200Z"/></svg>
<svg class="a" style="left:1360px;top:380px" width="26" height="28" viewBox="1360 380 26 28"><path fill="#fff" stroke="#08080c" stroke-width="1.400" stroke-linejoin="round" d="M1368.750 385.200V399.700L1371.900 396.800L1374.900 402.400L1377.200 401.400L1374.700 396L1379.200 395.700Z"/></svg>
<span class="t qn" style="left:85.8px;top:26.6px;transform:scaleX(1.2190)">Quick Navigation</span>
<span class="t tr g" style="left:154.4px;top:83.2px;transform:scaleX(1.0171)">My Files</span>
<span class="t tr" style="left:177.0px;top:126.1px;transform:scaleX(1.0274)">.cagefs</span>
<span class="t tr" style="left:177.0px;top:172.1px;transform:scaleX(1.0320)">.cl.selector</span>
<span class="t tr" style="left:177.0px;top:218.1px;transform:scaleX(1.0958)">.php</span>
<span class="t tr" style="left:177.0px;top:264.1px;transform:scaleX(1.0358)">.redis</span>
<span class="t tr" style="left:177.0px;top:310.1px;transform:scaleX(1.0619)">.softaculous</span>
<span class="t tr" style="left:177.0px;top:356.1px;transform:scaleX(1.0180)">.spamassassin</span>
<span class="t tr" style="left:177.0px;top:402.1px;transform:scaleX(1.0987)">domains</span>
<span class="t tr" style="left:204.0px;top:445.1px;transform:scaleX(1.0939)">etheronkennisbank.nl</span>
<span class="t tr" style="left:231.0px;top:488.1px;transform:scaleX(1.0659)">.htpasswd</span>
<span class="t tr" style="left:231.0px;top:534.1px;transform:scaleX(1.0814)">awstats</span>
<span class="t tr" style="left:231.0px;top:580.1px;transform:scaleX(1.0897)">logs</span>
<span class="t tr" style="left:231.0px;top:626.1px;transform:scaleX(1.1015)">private_html</span>
<span class="t tr" style="left:231.0px;top:672.1px;transform:scaleX(1.1134)">public_ftp</span>
<span class="t tr g" style="left:231.0px;top:715.1px;transform:scaleX(1.1203)">public_html</span>
<span class="t tr" style="left:258.0px;top:758.1px;transform:scaleX(1.1379)">wp-admin</span>
<span class="t tr" style="left:258.0px;top:804.1px;transform:scaleX(1.1448)">wp-content</span>
<span class="t tr" style="left:258.0px;top:850.1px;transform:scaleX(1.1108)">wp-includes</span>
<span class="t tr" style="left:231.0px;top:899.2px;transform:scaleX(1.0730)">stats</span>
<span class="t tr" style="left:177.0px;top:951.1px;transform:scaleX(1.1225)">imap</span>
<span class="t tr" style="left:177.0px;top:997.2px;transform:scaleX(1.0976)">Maildir</span>
<span class="t tr" style="left:177.0px;top:1043.2px;transform:scaleX(1.1203)">public_html</span>
<span class="t tr" style="left:177.0px;top:1089.2px;transform:scaleX(1.1993)">tmp</span>
<span class="t tr" style="left:153.6px;top:1135.1px;transform:scaleX(1.0308)">Trash Bin</span>
<span class="t bc g" style="left:728.6px;top:23.3px;transform:scaleX(1.0897)">etheronkennisbank.nl</span>
<span class="t bc" style="left:978.0px;top:23.3px;transform:scaleX(1.1203)">public_html</span>
<span class="t ff" style="left:2269.8px;top:24.4px;transform:scaleX(1.1186)">Filter files...</span>
<span class="t th" style="left:730.0px;top:77.6px;transform:scaleX(1.1886)">Name</span>
<span class="t th" style="left:1302.5px;top:77.6px;transform:scaleX(1.0702)">Size</span>
<span class="t th" style="left:1574.0px;top:77.6px;transform:scaleX(1.1826)">Permissions</span>
<span class="t th" style="left:1946.5px;top:77.6px;transform:scaleX(1.1738)">Date</span>
<span class="t th" style="left:2269.0px;top:77.6px;transform:scaleX(1.1406)">UID/GID</span>
<span class="t td" style="left:730.2px;top:125.5px;transform:scaleX(1.1498)">wp-admin</span>
<span class="t td" style="left:1574.2px;top:125.5px;transform:scaleX(1.0556)">rwx-rx-rx (755)</span>
<span class="t td" style="left:1946.2px;top:125.5px;transform:scaleX(1.1098)">2024-08-05</span>
<span class="t td" style="left:2269.2px;top:125.5px;transform:scaleX(1.1044)">bas/bas</span>
<span class="t td" style="left:730.2px;top:173.5px;transform:scaleX(1.1762)">wp-content</span>
<span class="t td" style="left:1574.2px;top:173.5px;transform:scaleX(1.0556)">rwx-rx-rx (755)</span>
<span class="t td" style="left:1946.2px;top:173.5px;transform:scaleX(1.1143)">2024-08-06</span>
<span class="t td" style="left:2269.2px;top:173.5px;transform:scaleX(1.1044)">bas/bas</span>
<span class="t td" style="left:730.2px;top:221.5px;transform:scaleX(1.1477)">wp-includes</span>
<span class="t td" style="left:1574.2px;top:221.5px;transform:scaleX(1.0556)">rwx-rx-rx (755)</span>
<span class="t td" style="left:1946.2px;top:221.5px;transform:scaleX(1.1098)">2024-08-05</span>
<span class="t td" style="left:2269.2px;top:221.5px;transform:scaleX(1.1044)">bas/bas</span>
<span class="t td" style="left:730.2px;top:269.5px;transform:scaleX(1.0706)">.htaccess</span>
<span class="t td" style="left:1302.3px;top:269.5px;transform:scaleX(1.0414)">523.00 B</span>
<span class="t td" style="left:1574.2px;top:269.5px;transform:scaleX(1.1138)">rw-r-r (644)</span>
<span class="t td" style="left:1946.2px;top:269.5px;transform:scaleX(1.1098)">2024-08-05</span>
<span class="t td" style="left:2269.2px;top:269.5px;transform:scaleX(1.1044)">bas/bas</span>
<span class="t td" style="left:730.2px;top:317.5px;transform:scaleX(1.1314)">index.php</span>
<span class="t td" style="left:1302.3px;top:317.5px;transform:scaleX(1.0798)">405.00 B</span>
<span class="t td" style="left:1574.2px;top:317.5px;transform:scaleX(1.1138)">rw-r-r (644)</span>
<span class="t td" style="left:1946.2px;top:317.5px;transform:scaleX(1.1098)">2020-02-06</span>
<span class="t td" style="left:2269.2px;top:317.5px;transform:scaleX(1.1044)">bas/bas</span>
<span class="t td" style="left:730.2px;top:365.5px;transform:scaleX(1.1209)">license.txt</span>
<span class="t td" style="left:1302.3px;top:365.5px;transform:scaleX(0.9850)">19.45 KB</span>
<span class="t td" style="left:1574.2px;top:365.5px;transform:scaleX(1.1138)">rw-r-r (644)</span>
<span class="t td" style="left:1946.2px;top:365.5px;transform:scaleX(1.0195)">2024-01-01</span>
<span class="t td" style="left:2269.2px;top:365.5px;transform:scaleX(1.1044)">bas/bas</span>
<span class="t td" style="left:730.2px;top:413.5px;transform:scaleX(1.1391)">readme.html</span>
<span class="t td" style="left:1302.3px;top:413.5px;transform:scaleX(1.0202)">7.24 KB</span>
<span class="t td" style="left:1574.2px;top:413.5px;transform:scaleX(1.1138)">rw-r-r (644)</span>
<span class="t td" style="left:1946.2px;top:413.5px;transform:scaleX(1.0571)">2024-06-18</span>
<span class="t td" style="left:2269.2px;top:413.5px;transform:scaleX(1.1044)">bas/bas</span>
<span class="t td" style="left:730.2px;top:461.5px;transform:scaleX(1.1399)">wp-activate.php</span>
<span class="t td" style="left:1302.3px;top:461.5px;transform:scaleX(0.9445)">7.21 KB</span>
<span class="t td" style="left:1574.2px;top:461.5px;transform:scaleX(1.1138)">rw-r-r (644)</span>
<span class="t td" style="left:1946.2px;top:461.5px;transform:scaleX(1.0346)">2024-02-13</span>
<span class="t td" style="left:2269.2px;top:461.5px;transform:scaleX(1.1044)">bas/bas</span>
<span class="t td" style="left:730.2px;top:509.5px;transform:scaleX(1.1469)">wp-blog-header.php</span>
<span class="t td" style="left:1302.3px;top:509.5px;transform:scaleX(0.9933)">351.00 B</span>
<span class="t td" style="left:1574.2px;top:509.5px;transform:scaleX(1.1138)">rw-r-r (644)</span>
<span class="t td" style="left:1946.2px;top:509.5px;transform:scaleX(1.1098)">2020-02-06</span>
<span class="t td" style="left:2269.2px;top:509.5px;transform:scaleX(1.1044)">bas/bas</span>
<span class="t td" style="left:730.2px;top:557.5px;transform:scaleX(1.1530)">wp-comments-post.php</span>
<span class="t td" style="left:1302.3px;top:557.5px;transform:scaleX(1.0202)">2.27 KB</span>
<span class="t td" style="left:1574.2px;top:557.5px;transform:scaleX(1.1138)">rw-r-r (644)</span>
<span class="t td" style="left:1946.2px;top:557.5px;transform:scaleX(1.0496)">2023-06-14</span>
<span class="t td" style="left:2269.2px;top:557.5px;transform:scaleX(1.1044)">bas/bas</span>
<span class="t td" style="left:730.2px;top:605.5px;transform:scaleX(1.1463)">wp-config-sample.php</span>
<span class="t td" style="left:1302.3px;top:605.5px;transform:scaleX(1.0310)">2.96 KB</span>
<span class="t td" style="left:1574.2px;top:605.5px;transform:scaleX(1.1138)">rw-r-r (644)</span>
<span class="t td" style="left:1946.2px;top:605.5px;transform:scaleX(1.0039)">2024-03-11</span>
<span class="t td" style="left:2269.2px;top:605.5px;transform:scaleX(1.1044)">bas/bas</span>
<span class="t td" style="left:730.2px;top:653.5px;transform:scaleX(1.1587)">wp-config.php</span>
<span class="t td" style="left:1302.3px;top:653.5px;transform:scaleX(1.0094)">3.23 KB</span>
<span class="t td" style="left:1574.2px;top:653.5px;transform:scaleX(1.1138)">rw-r-r (644)</span>
<span class="t td" style="left:1946.2px;top:653.5px;transform:scaleX(1.1098)">2024-08-05</span>
<span class="t td" style="left:2269.2px;top:653.5px;transform:scaleX(1.1044)">bas/bas</span>
<span class="t td" style="left:730.2px;top:701.5px;transform:scaleX(1.1433)">wp-cron.php</span>
<span class="t td" style="left:1302.3px;top:701.5px;transform:scaleX(0.9554)">5.51 KB</span>
<span class="t td" style="left:1574.2px;top:701.5px;transform:scaleX(1.1138)">rw-r-r (644)</span>
<span class="t td" style="left:1946.2px;top:701.5px;transform:scaleX(1.0165)">2023-05-31</span>
<span class="t td" style="left:2269.2px;top:701.5px;transform:scaleX(1.1044)">bas/bas</span>
<span class="t td" style="left:730.2px;top:749.5px;transform:scaleX(1.1530)">wp-links-opml.php</span>
<span class="t td" style="left:1302.3px;top:749.5px;transform:scaleX(1.0526)">2.44 KB</span>
<span class="t td" style="left:1574.2px;top:749.5px;transform:scaleX(1.1138)">rw-r-r (644)</span>
<span class="t td" style="left:1946.2px;top:749.5px;transform:scaleX(0.9733)">2022-11-27</span>
<span class="t td" style="left:2269.2px;top:749.5px;transform:scaleX(1.1044)">bas/bas</span>
<span class="t td" style="left:730.2px;top:797.5px;transform:scaleX(1.1408)">wp-load.php</span>
<span class="t td" style="left:1302.3px;top:797.5px;transform:scaleX(1.0526)">3.84 KB</span>
<span class="t td" style="left:1574.2px;top:797.5px;transform:scaleX(1.1138)">rw-r-r (644)</span>
<span class="t td" style="left:1946.2px;top:797.5px;transform:scaleX(1.0039)">2024-03-11</span>
<span class="t td" style="left:2269.2px;top:797.5px;transform:scaleX(1.1044)">bas/bas</span>
<span class="t td" style="left:730.2px;top:845.5px;transform:scaleX(1.1639)">wp-login.php</span>
<span class="t td" style="left:1302.3px;top:845.5px;transform:scaleX(1.0598)">50.04 KB</span>
<span class="t td" style="left:1574.2px;top:845.5px;transform:scaleX(1.1138)">rw-r-r (644)</span>
<span class="t td" style="left:1946.2px;top:845.5px;transform:scaleX(1.0827)">2024-05-28</span>
<span class="t td" style="left:2269.2px;top:845.5px;transform:scaleX(1.1044)">bas/bas</span>
<span class="t td" style="left:730.2px;top:893.5px;transform:scaleX(1.1527)">wp-mail.php</span>
<span class="t td" style="left:1302.3px;top:893.5px;transform:scaleX(1.0310)">8.33 KB</span>
<span class="t td" style="left:1574.2px;top:893.5px;transform:scaleX(1.1138)">rw-r-r (644)</span>
<span class="t td" style="left:1946.2px;top:893.5px;transform:scaleX(1.0391)">2023-09-16</span>
<span class="t td" style="left:2269.2px;top:893.5px;transform:scaleX(1.1044)">bas/bas</span>
<span class="t td" style="left:730.2px;top:941.5px;transform:scaleX(1.1509)">wp-settings.php</span>
<span class="t td" style="left:1302.3px;top:941.5px;transform:scaleX(1.0037)">28.10 KB</span>
<span class="t td" style="left:1574.2px;top:941.5px;transform:scaleX(1.1138)">rw-r-r (644)</span>
<span class="t td" style="left:1946.2px;top:941.5px;transform:scaleX(1.0947)">2024-07-09</span>
<span class="t td" style="left:2269.2px;top:941.5px;transform:scaleX(1.1044)">bas/bas</span>
<span class="t td" style="left:730.2px;top:989.5px;transform:scaleX(1.1447)">wp-signup.php</span>
<span class="t td" style="left:1302.3px;top:989.5px;transform:scaleX(1.0224)">33.58 KB</span>
<span class="t td" style="left:1574.2px;top:989.5px;transform:scaleX(1.1138)">rw-r-r (644)</span>
<span class="t td" style="left:1946.2px;top:989.5px;transform:scaleX(1.0421)">2023-06-19</span>
<span class="t td" style="left:2269.2px;top:989.5px;transform:scaleX(1.1044)">bas/bas</span>
<span class="t td" style="left:730.2px;top:1037.5px;transform:scaleX(1.1395)">wp-trackback.php</span>
<span class="t td" style="left:1302.3px;top:1037.5px;transform:scaleX(1.0526)">4.77 KB</span>
<span class="t td" style="left:1574.2px;top:1037.5px;transform:scaleX(1.1138)">rw-r-r (644)</span>
<span class="t td" style="left:1946.2px;top:1037.5px;transform:scaleX(1.0722)">2023-06-22</span>
<span class="t td" style="left:2269.2px;top:1037.5px;transform:scaleX(1.1044)">bas/bas</span>
<span class="t td" style="left:730.2px;top:1085.5px;transform:scaleX(1.1450)">xmlrpc.php</span>
<span class="t td" style="left:1302.3px;top:1085.5px;transform:scaleX(0.9445)">3.17 KB</span>
<span class="t td" style="left:1574.2px;top:1085.5px;transform:scaleX(1.1138)">rw-r-r (644)</span>
<span class="t td" style="left:1946.2px;top:1085.5px;transform:scaleX(1.0947)">2024-03-02</span>
<span class="t td" style="left:2269.2px;top:1085.5px;transform:scaleX(1.1044)">bas/bas</span>
</body></html>
